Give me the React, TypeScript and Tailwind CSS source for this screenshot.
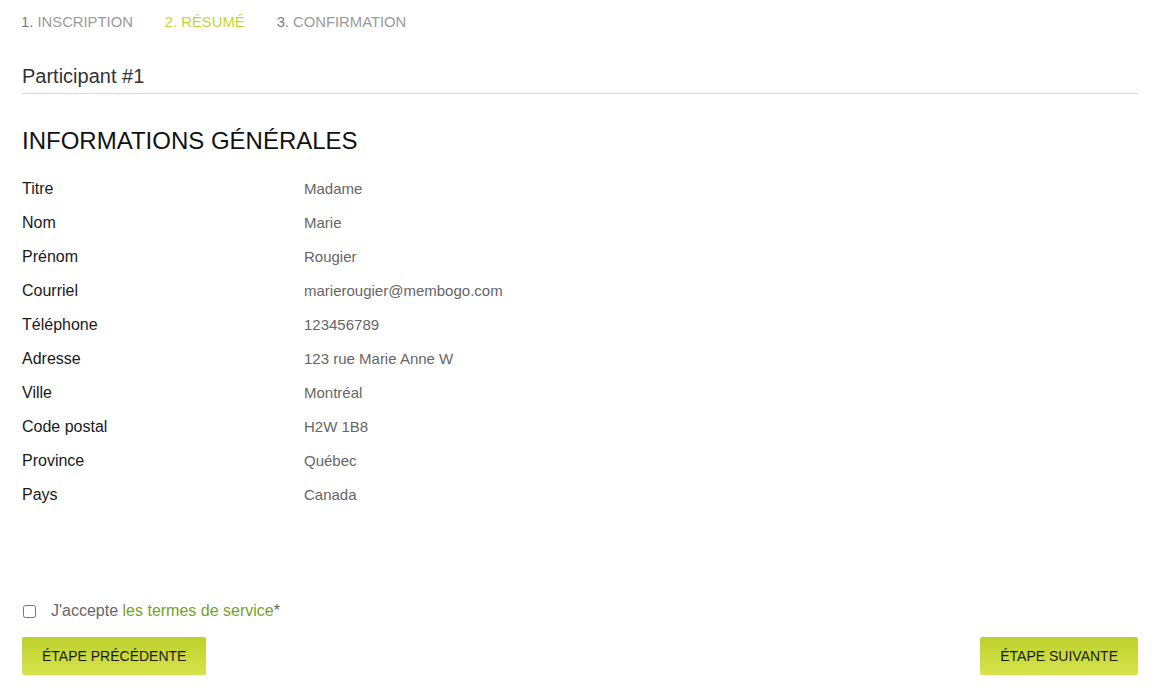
import React from "react";

const steps = [
  { n: "1.", label: "INSCRIPTION", active: false },
  { n: "2.", label: "RÉSUMÉ", active: true },
  { n: "3.", label: "CONFIRMATION", active: false },
];

const rows: [string, string][] = [
  ["Titre", "Madame"],
  ["Nom", "Marie"],
  ["Prénom", "Rougier"],
  ["Courriel", "marierougier@membogo.com"],
  ["Téléphone", "123456789"],
  ["Adresse", "123 rue Marie Anne W"],
  ["Ville", "Montréal"],
  ["Code postal", "H2W 1B8"],
  ["Province", "Québec"],
  ["Pays", "Canada"],
];

export default function App() {
  return (
    <div
      className="min-h-screen bg-white px-[22px] w-[1160px]"
      style={{ fontFamily: '"Liberation Sans", Arial, sans-serif' }}
    >
      {/* steps */}
      <div className="-ml-[1px] flex gap-[32px] pt-[12px] text-[14.8px] leading-[20px]">
        {steps.map((s) => (
          <div key={s.n} className={s.active ? "text-[#c2d62f]" : "text-[#9a9a9a]"}>
            <span className={s.active ? "" : "text-[#7a7a7a]"}>{s.n}</span> {s.label}
          </div>
        ))}
      </div>

      <div className="mt-[30px] pb-[3px] border-b border-[#dddddd] text-[20px] leading-[28px] text-[#333333]">
        Participant #1
      </div>

      <h2 className="mt-[32px] text-[24px] leading-[30px] text-[#111111]">INFORMATIONS GÉNÉRALES</h2>

      <div className="mt-[16px]">
        {rows.map(([k, v]) => (
          <div key={k} className="flex h-[34px] items-center">
            <div className="w-[282px] text-[16px] text-[#1a1a1a]">{k}</div>
            <div className="text-[15px] text-[#666666]">{v}</div>
          </div>
        ))}
      </div>

      <label className="mt-[89px] flex h-[20px] items-center text-[16px]">
        <input type="checkbox" className="ml-[1px] h-[13px] w-[13px] accent-[#888]" />
        <span className="ml-[15px] text-[#666666]">
          J'accepte <a className="text-[#77a12a]">les termes de service</a>*
        </span>
      </label>

      <div className="mt-[16px] flex justify-between">
        <button className="h-[38px] rounded-[2px] bg-gradient-to-b from-[#bdd12c] to-[#d6e44b] px-[20px] text-[14px] text-[#1a1a1a]">
          ÉTAPE PRÉCÉDENTE
        </button>
        <button className="h-[38px] rounded-[2px] bg-gradient-to-b from-[#bdd12c] to-[#d6e44b] px-[20px] text-[14px] text-[#1a1a1a]">
          ÉTAPE SUIVANTE
        </button>
      </div>
    </div>
  );
}
